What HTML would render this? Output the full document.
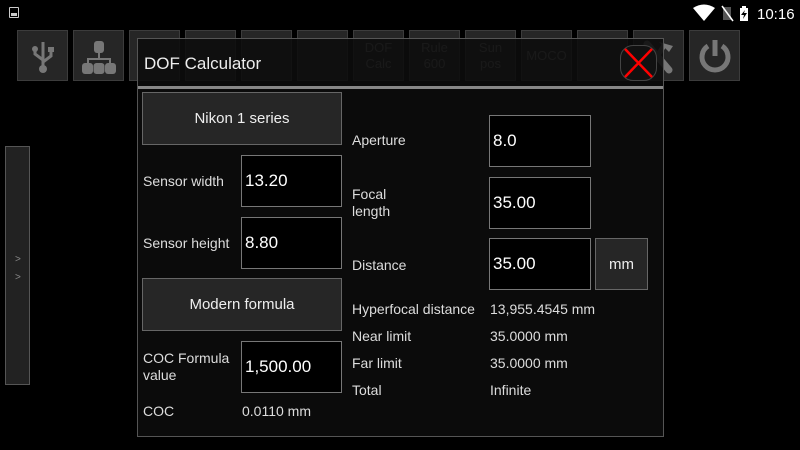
<!DOCTYPE html>
<html><head><style>
*{margin:0;padding:0;box-sizing:border-box}
body{width:800px;height:450px;background:#000;position:relative;overflow:hidden;font-family:"Liberation Sans",sans-serif;color:#ddd}
.a{position:absolute}
.tb{position:absolute;top:30px;width:51px;height:51px;background:#262626;border:1px solid #3c3c3c;color:#777;font-size:13px;text-align:center;line-height:16px;padding-top:9px}
.lbl{position:absolute;font-size:14px;color:#ddd}
.in{position:absolute;background:#000;border:1px solid #777;color:#fff;font-size:17px;padding-left:3px;display:flex;align-items:center;width:100px;height:52px}
.btn{position:absolute;background:#262626;border:1px solid #666;color:#eee;font-size:15px;display:flex;align-items:center;justify-content:center}
</style></head><body>
<!-- status bar -->
<div class="a" style="left:9px;top:7px;width:10px;height:11px;border:1px solid #ccc;border-radius:1px"><div style="margin:5px 1px 0;height:3px;background:#ccc"></div></div>
<svg class="a" style="left:690px;top:4px" width="110" height="18">
<path d="M3 4 Q14 -3 25 4 L14 17 Z" fill="#fff"/>
<path d="M33 3 L41 3 L41 16 L33 16 Z" fill="#555"/><path d="M32 2 L43 17" stroke="#fff" stroke-width="1.5"/>
<rect x="50" y="4" width="8" height="13" fill="#fff"/><rect x="52" y="2" width="4" height="2" fill="#fff"/><path d="M55 6 L51 11 L54 11 L53 15 L57 9 L54 9 Z" fill="#000"/>
<text x="67" y="15" font-family="Liberation Sans" font-size="15" fill="#fff">10:16</text>
</svg>
<!-- toolbar -->
<div class="tb" style="left:17px"><svg width="30" height="34" viewBox="0 0 30 34"><path d="M15 2 L15 28 M15 20 L7 14 L7 10 M15 22 L23 16 L23 11" stroke="#777" stroke-width="3" fill="none"/><circle cx="15" cy="29" r="4" fill="#777"/><rect x="20" y="7" width="6" height="5" fill="#777"/><circle cx="7" cy="9" r="3" fill="#777"/></svg></div>
<div class="tb" style="left:73px"><svg width="36" height="34" viewBox="0 0 36 34"><rect x="13" y="1" width="10" height="12" rx="3" fill="#777"/><path d="M18 13 L18 19 M7 24 L7 19 L29 19 L29 24" stroke="#777" stroke-width="2" fill="none"/><rect x="1" y="23" width="11" height="11" rx="3" fill="#777"/><rect x="12.5" y="23" width="11" height="11" rx="3" fill="#777"/><rect x="24" y="23" width="11" height="11" rx="3" fill="#777"/></svg></div>
<div class="tb" style="left:129px"></div><div class="tb" style="left:185px"></div><div class="tb" style="left:241px"></div><div class="tb" style="left:297px"></div>
<div class="tb" style="left:353px">DOF<br>Calc</div><div class="tb" style="left:409px">Rule<br>600</div><div class="tb" style="left:465px">Sun<br>pos</div>
<div class="tb" style="left:521px;padding-top:17px">MOCO</div><div class="tb" style="left:577px"></div>
<div class="tb" style="left:633px"><svg width="40" height="36" viewBox="0 0 40 36"><path d="M8 4 L30 30" stroke="#777" stroke-width="7" stroke-linecap="round"/><path d="M26 4 L12 26" stroke="#777" stroke-width="5"/><path d="M20 2 L34 6 L30 12 Z" fill="#777"/></svg></div>
<div class="tb" style="left:689px;padding-top:6px"><svg width="38" height="38" viewBox="0 0 38 38"><path d="M12 9 A13 13 0 1 0 26 9" stroke="#777" stroke-width="5" fill="none"/><path d="M19 3 L19 19" stroke="#777" stroke-width="5"/></svg></div>
<!-- side panel -->
<div class="a" style="left:5px;top:146px;width:25px;height:239px;background:#222;border:1px solid #555;color:#888;font-size:10px;padding:104px 0 0 9px;line-height:18px">&gt;<br>&gt;</div>
<!-- dialog -->
<div class="a" style="left:137px;top:38px;width:527px;height:399px;background:rgba(12,12,12,0.88);border:1px solid #555"></div>
<div class="a" style="left:138px;top:86px;width:525px;height:3px;background:#888"></div>
<div class="a" style="left:138px;top:89px;width:525px;height:347px;background:#0b0b0b"></div>
<div class="lbl" style="left:144px;top:54px;font-size:17px;color:#eee">DOF Calculator</div>
<div class="a" style="left:620px;top:45px;width:37px;height:36px;border:1px solid #444;border-radius:13px;background:#111"></div>
<svg class="a" style="left:620px;top:45px" width="37" height="36"><path d="M5 4 L32 32 M32 4 L5 32" stroke="#f00" stroke-width="2.5"/></svg>

<div class="btn" style="left:142px;top:92px;width:200px;height:53px">Nikon 1 series</div>
<div class="lbl" style="left:143px;top:173px">Sensor width</div>
<div class="in" style="left:241px;top:155px;width:101px">13.20</div>
<div class="lbl" style="left:143px;top:235px">Sensor height</div>
<div class="in" style="left:241px;top:217px;width:101px">8.80</div>
<div class="btn" style="left:142px;top:278px;width:200px;height:53px">Modern formula</div>
<div class="lbl" style="left:143px;top:350px;line-height:17px">COC Formula<br>value</div>
<div class="in" style="left:241px;top:341px;width:101px">1,500.00</div>
<div class="lbl" style="left:143px;top:403px">COC</div>
<div class="lbl" style="left:242px;top:403px">0.0110 mm</div>

<div class="lbl" style="left:352px;top:132px">Aperture</div>
<div class="in" style="left:489px;top:115px;width:102px">8.0</div>
<div class="lbl" style="left:352px;top:186px;line-height:17px">Focal<br>length</div>
<div class="in" style="left:489px;top:177px;width:102px">35.00</div>
<div class="lbl" style="left:352px;top:257px">Distance</div>
<div class="in" style="left:489px;top:238px;width:102px">35.00</div>
<div class="btn" style="left:595px;top:238px;width:53px;height:52px">mm</div>
<div class="lbl" style="left:352px;top:301px">Hyperfocal distance</div>
<div class="lbl" style="left:490px;top:301px">13,955.4545 mm</div>
<div class="lbl" style="left:352px;top:328px">Near limit</div>
<div class="lbl" style="left:490px;top:328px">35.0000 mm</div>
<div class="lbl" style="left:352px;top:355px">Far limit</div>
<div class="lbl" style="left:490px;top:355px">35.0000 mm</div>
<div class="lbl" style="left:352px;top:382px">Total</div>
<div class="lbl" style="left:490px;top:382px">Infinite</div>
</body></html>
